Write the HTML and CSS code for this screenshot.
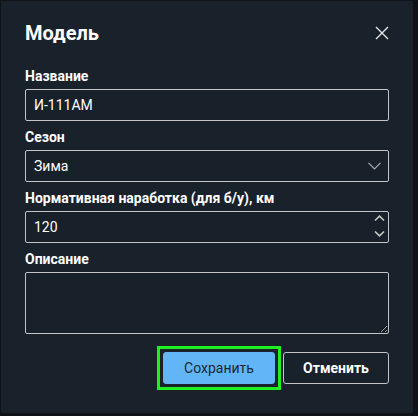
FILE: index.html
```html
<!DOCTYPE html>
<html lang="ru">
<head>
<meta charset="utf-8">
<title>Модель</title>
<link rel="stylesheet" href="styles.css">
</head>
<body>
<div class="dialog">
  <div class="header">
    <h2 class="title">Модель</h2>
    <button class="close" type="button" aria-label="Закрыть">
      <svg width="14" height="14" viewBox="0 0 14 14"><path d="M1 1 L13 13 M13 1 L1 13" stroke="#e6e6e6" stroke-width="1.4" fill="none"/></svg>
    </button>
  </div>
  <form class="form">
    <div class="field">
      <label class="label">Название</label>
      <input class="control" type="text" value="И-111АМ">
    </div>
    <div class="field">
      <label class="label">Сезон</label>
      <div class="wrap">
        <select class="control select"><option>Зима</option></select>
        <svg class="chevron" width="13" height="8" viewBox="0 0 13 8"><path d="M0.5 0.8 L6.5 6.8 L12.5 0.8" stroke="#a9acb0" stroke-width="1.2" fill="none"/></svg>
      </div>
    </div>
    <div class="field">
      <label class="label">Нормативная наработка (для б/у), км</label>
      <div class="wrap">
        <input class="control number" type="text" value="120">
        <div class="spin">
          <svg width="11" height="7" viewBox="0 0 11 7"><path d="M1 5.5 L5.5 1.2 L10 5.5" stroke="#c8c8c8" stroke-width="1.6" fill="none"/></svg>
          <svg width="11" height="7" viewBox="0 0 11 7"><path d="M1 1.5 L5.5 5.8 L10 1.5" stroke="#c8c8c8" stroke-width="1.6" fill="none"/></svg>
        </div>
      </div>
    </div>
    <div class="field">
      <label class="label">Описание</label>
      <textarea class="control area"></textarea>
    </div>
    <div class="actions">
      <button class="btn save" type="button">Сохранить</button>
      <button class="btn cancel" type="button">Отменить</button>
    </div>
  </form>
</div>
</body>
</html>
```
FILE: styles.css
```css
html, body {
  margin: 0;
  padding: 0;
  background: #0f1318;
  font-family: Roboto, "Noto Sans", sans-serif;
  color: #ffffff;
}
.dialog {
  margin: 1px 0 0 1px;
  width: 412px;
  height: 412px;
  box-sizing: border-box;
  padding: 18px 24px 23px;
  background: #19212b;
}
.header {
  display: flex;
  justify-content: space-between;
  align-items: center;
  height: 28px;
}
.title {
  margin: 0;
  font-size: 20px;
  line-height: 28px;
  font-weight: 700;
}
.close {
  width: 16px;
  height: 16px;
  padding: 0;
  margin-right: -1px;
  border: 0;
  background: transparent;
  display: flex;
  align-items: center;
  justify-content: center;
}
.form {
  margin-top: 19px;
}
.field {
  margin-bottom: 6px;
}
.label {
  display: block;
  font-size: 14px;
  line-height: 20px;
  font-weight: 700;
  margin-bottom: 3px;
}
.wrap {
  position: relative;
}
.control {
  display: block;
  width: 100%;
  height: 32px;
  box-sizing: border-box;
  margin: 0;
  padding: 0 8px;
  border: 1px solid #c2c4c7;
  border-radius: 2px;
  background: #18202a;
  color: #ffffff;
  font-family: inherit;
  font-size: 14px;
  outline: none;
}
.select {
  appearance: none;
  -webkit-appearance: none;
}
.chevron {
  position: absolute;
  right: 8px;
  top: 12px;
}
.spin {
  position: absolute;
  right: 4px;
  top: 4px;
  display: flex;
  flex-direction: column;
  gap: 8px;
}
.spin svg {
  display: block;
}
.area {
  height: 62px;
  padding: 6px 8px;
  resize: vertical;
}
.actions {
  display: flex;
  justify-content: flex-end;
  gap: 8px;
  margin-top: 18px;
}
.btn {
  height: 32px;
  box-sizing: border-box;
  padding: 0;
  border-radius: 3px;
  font-family: inherit;
  font-size: 14px;
  flex: none;
}
.save {
  position: relative;
  width: 112px;
  background: #62b6f7;
  border: 1px solid #62b6f7;
  color: #1c2733;
  font-weight: 400;
}
.save::after {
  content: "";
  position: absolute;
  inset: -7px;
  border: 3px solid #1ff01f;
  pointer-events: none;
}
.cancel {
  width: 106px;
  background: #19212b;
  border: 1px solid #c2c4c7;
  color: #ffffff;
  font-weight: 700;
}
```
